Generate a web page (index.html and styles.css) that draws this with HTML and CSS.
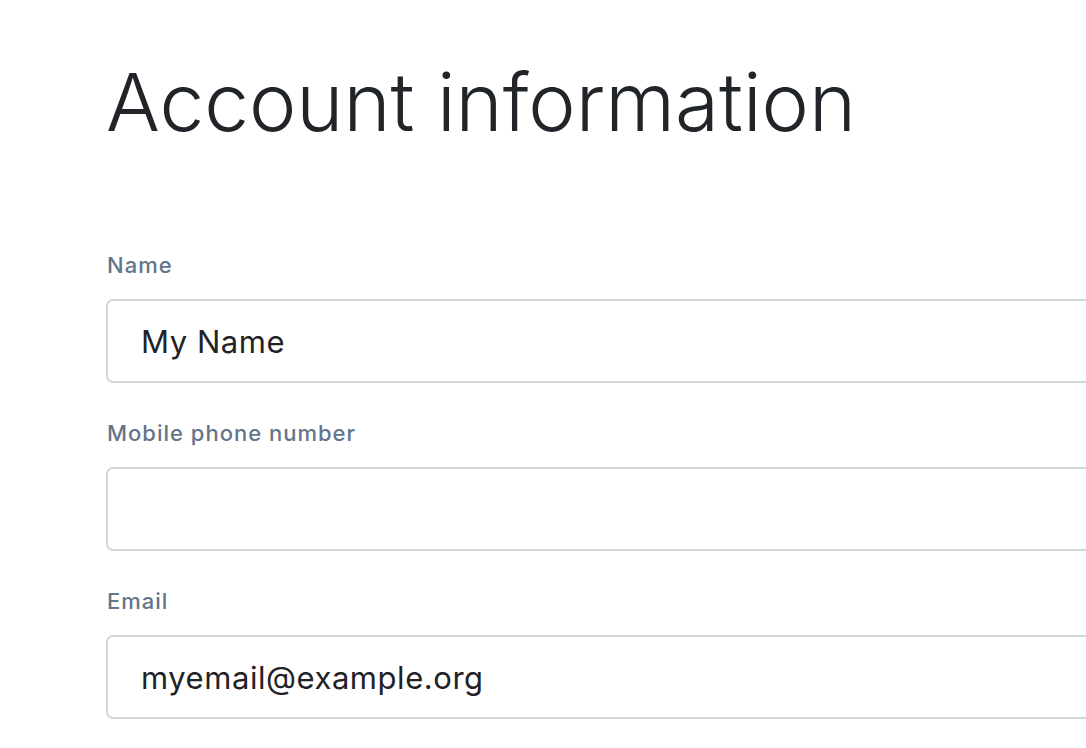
FILE: index.html
```html
<!DOCTYPE html>
<html lang="en">
<head>
<meta charset="utf-8">
<title>Account information</title>
<link rel="stylesheet" href="styles.css">
</head>
<body>
<main class="page">
  <h1 class="title">Account information</h1>
  <form class="form">
    <div class="field">
      <label class="label" for="name">Name</label>
      <input class="input" id="name" type="text" value="My Name">
    </div>
    <div class="field">
      <label class="label" for="phone">Mobile phone number</label>
      <input class="input" id="phone" type="tel" value="">
    </div>
    <div class="field">
      <label class="label" for="email">Email</label>
      <input class="input" id="email" type="email" value="myemail@example.org">
    </div>
  </form>
</main>
</body>
</html>
```

FILE: styles.css
```css
html, body {
  margin: 0;
  padding: 0;
  background: #ffffff;
  overflow: hidden;
}

body {
  font-family: Inter, "Noto Sans", sans-serif;
  width: 1086px;
  height: 748px;
}

.page {
  padding: 52px 0 0 106px;
  width: 1060px;
}

.title {
  margin: 0;
  font-size: 80px;
  line-height: 100px;
  font-weight: 300;
  color: #212529;
  letter-spacing: 0;
}

.form {
  margin-top: 100px;
  display: flex;
  flex-direction: column;
  gap: 37px;
}

.field {
  display: flex;
  flex-direction: column;
  gap: 21px;
}

.label {
  font-size: 22px;
  line-height: 26px;
  font-weight: 500;
  color: #64748b;
  letter-spacing: 1px;
  padding-left: 1px;
}

.input {
  box-sizing: border-box;
  height: 84px;
  width: 100%;
  border: 2px solid #d1d5db;
  border-radius: 7px;
  padding: 0 33px;
  font-family: Inter, "Noto Sans", sans-serif;
  font-size: 31px;
  letter-spacing: 0.55px;
  color: #1f2226;
  background: #fff;
  outline: none;
}
```
